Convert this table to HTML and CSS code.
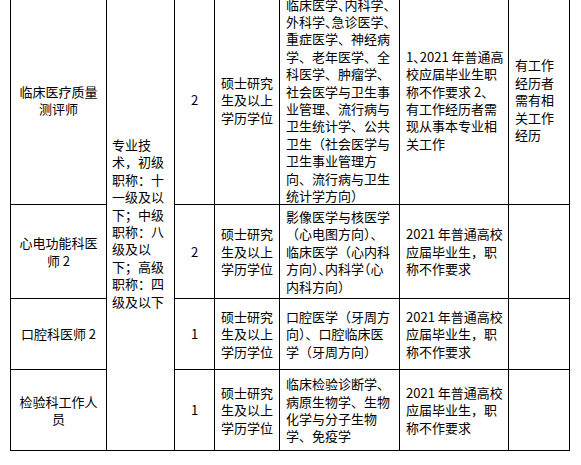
FILE: index.html
```html
<!DOCTYPE html>
<html lang="zh-CN">
<head>
<meta charset="utf-8">
<title>岗位表</title>
<link rel="stylesheet" href="styles.css">
</head>
<body>
<div class="sheet">
  <div class="c center"><p class="t">临床医疗质量<br>测评师</p></div>
  <div class="c req"><p class="t">专业技<br>术，初级<br>职称：十<br>一级及以<br>下；中级<br>职称：八<br>级及以<br>下；高级<br>职称：四<br>级及以下</p></div>
  <div class="c center"><p class="t">2</p></div>
  <div class="c center"><p class="t">硕士研究<br>生及以上<br>学历学位</p></div>
  <div class="c"><p class="t">临床医学<span class="h">、</span>内科学<span class="h">、</span><br>外科学<span class="h">、</span>急诊医学<span class="h">、</span><br>重症医学、神经病<br>学、老年医学、全<br>科医学、肿瘤学、<br>社会医学与卫生事<br>业管理、流行病与<br>卫生统计学、公共<br>卫生（社会医学与<br>卫生事业管理方<br>向、流行病与卫生<br>统计学方向）</p></div>
  <div class="c"><p class="t">1<span class="h">、</span>2021 年普通高<br>校应届毕业生职<br>称不作要求 2<span class="h">、</span><br>有工作经历者需<br>现从事本专业相<br>关工作</p></div>
  <div class="c"><p class="t">有工作<br>经历者<br>需有相<br>关工作<br>经历</p></div>

  <div class="c center"><p class="t">心电功能科医<br>师 2</p></div>
  <div class="c center"><p class="t">2</p></div>
  <div class="c center"><p class="t">硕士研究<br>生及以上<br>学历学位</p></div>
  <div class="c"><p class="t">影像医学与核医学<br>（心电图方向）、<br>临床医学（心内科<br>方向<span class="h">）、</span>内科学<span class="h">（</span>心<br>内科方向）</p></div>
  <div class="c"><p class="t">2021 年普通高校<br>应届毕业生，职<br>称不作要求</p></div>
  <div class="c"></div>

  <div class="c center"><p class="t">口腔科医师 2</p></div>
  <div class="c center"><p class="t">1</p></div>
  <div class="c center"><p class="t">硕士研究<br>生及以上<br>学历学位</p></div>
  <div class="c"><p class="t">口腔医学（牙周方<br>向）、口腔临床医<br>学（牙周方向）</p></div>
  <div class="c"><p class="t">2021 年普通高校<br>应届毕业生，职<br>称不作要求</p></div>
  <div class="c"></div>

  <div class="c center"><p class="t">检验科工作人<br>员</p></div>
  <div class="c center"><p class="t">1</p></div>
  <div class="c center"><p class="t">硕士研究<br>生及以上<br>学历学位</p></div>
  <div class="c"><p class="t">临床检验诊断学、<br>病原生物学、生物<br>化学与分子生物<br>学、免疫学</p></div>
  <div class="c"><p class="t">2021 年普通高校<br>应届毕业生，职<br>称不作要求</p></div>
  <div class="c"></div>
</div>
</body>
</html>
```
FILE: styles.css
```css
html, body {
  margin: 0;
  padding: 0;
  background: #fff;
}

body {
  font-family: "Noto Sans CJK SC", "Noto Sans", sans-serif;
  font-size: 13px;
  line-height: 17.4px;
  color: #000;
}

.sheet {
  display: grid;
  grid-template-columns: 96px 68px 40px 65px 120px 109px 61px;
  grid-template-rows: 209px 94px 71px 81px;
  width: max-content;
  margin: -5px 0 0 10px;
  border-left: 1px solid #000;
  border-top: 1px solid #000;
}

.c {
  box-sizing: border-box;
  display: flex;
  align-items: center;
  justify-content: flex-start;
  padding: 0 5px 0 6px;
  border-right: 1px solid #000;
  border-bottom: 1px solid #000;
  white-space: nowrap;
  overflow: visible;
}

.t {
  margin: 0;
}

.center {
  justify-content: center;
  text-align: center;
  padding: 0 2px;
}

.req {
  grid-column: 2;
  grid-row: 1 / span 4;
  padding-left: 5px;
}

.h {
  font-feature-settings: "halt";
}
```
